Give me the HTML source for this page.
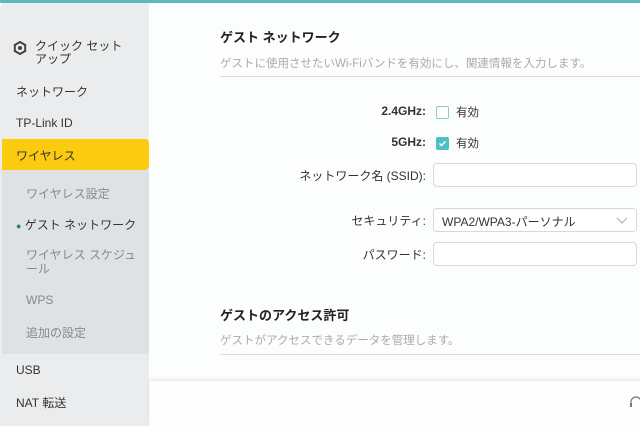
<!DOCTYPE html>
<html><head><meta charset="utf-8"><style>
*{margin:0;padding:0;box-sizing:border-box}
body{width:640px;height:426px;overflow:hidden;background:#fcfdfd;font-family:"Liberation Sans","Noto Sans CJK JP",sans-serif;position:relative}
.top{position:absolute;left:0;top:0;width:640px;height:3px;background:#5fb8c0}
.side{position:absolute;left:0;top:0;width:149px;height:426px;background:#eaecee;border-top-left-radius:10px}
.t{position:absolute;font-size:12px;color:#333;white-space:nowrap}
.sub{position:absolute;left:2px;top:170px;width:147px;height:184px;background:#dfe2e4}
.sel{position:absolute;left:2px;top:139px;width:147px;height:31px;background:#fccb10;border-radius:0 4px 4px 0}
.g{color:#888}
.h{position:absolute;left:220px;font-size:13px;font-weight:bold;color:#222}
.d{position:absolute;left:220px;font-size:11.5px;color:#aaa;white-space:nowrap}
.line{position:absolute;left:220px;width:420px;height:1px;background:#dcdcdc}
.lab{position:absolute;right:214px;font-size:12px;color:#333;text-align:right;white-space:nowrap}
.inp{position:absolute;left:433px;width:204px;height:24px;border:1px solid #d8d8d8;border-radius:4px;background:#fff}
.cb{position:absolute;left:436px;width:13px;height:13px;border:1px solid #8cc;border-radius:2px;background:#fff}
.bot{position:absolute;left:149px;top:381px;width:491px;height:45px;background:#fdfdfd;box-shadow:0 -2px 3px rgba(0,0,0,.08)}
</style></head><body>
<div class="side"></div>
<div class="top"></div>
<div class="sub"></div>
<div class="sel"></div>
<svg style="position:absolute;left:13px;top:41px" width="14" height="14" viewBox="0 0 14 14"><polygon points="7,1 12.2,4 12.2,10 7,13 1.8,10 1.8,4" fill="none" stroke="#444" stroke-width="2"/><circle cx="7" cy="7" r="2" fill="#444"/></svg>
<div class="t" style="left:35px;top:40px;line-height:13px">クイック セット<br>アップ</div>
<div class="t" style="left:16px;top:83px">ネットワーク</div>
<div class="t" style="left:16px;top:116px">TP-Link ID</div>
<div class="t" style="left:16px;top:147px">ワイヤレス</div>
<div class="t g" style="left:26px;top:185px">ワイヤレス設定</div>
<div class="t" style="left:16px;top:216px"><span style="font-size:9px;color:#2a7f80">●</span> ゲスト ネットワーク</div>
<div class="t g" style="left:26px;top:248px;line-height:14px">ワイヤレス スケジュ<br>ール</div>
<div class="t g" style="left:26px;top:293px">WPS</div>
<div class="t g" style="left:26px;top:324px">追加の設定</div>
<div class="t" style="left:16px;top:363px">USB</div>
<div class="t" style="left:16px;top:394px">NAT 転送</div>

<div class="h" style="top:27px">ゲスト ネットワーク</div>
<div class="d" style="top:55px">ゲストに使用させたいWi-Fiバンドを有効にし、関連情報を入力します。</div>
<div class="line" style="top:76px"></div>

<div class="lab" style="top:104px;font-weight:bold">2.4GHz:</div>
<div class="cb" style="top:106px"></div>
<div class="t" style="left:456px;top:104px;font-size:11.5px">有効</div>
<div class="lab" style="top:135px;font-weight:bold">5GHz:</div>
<div class="cb" style="top:137px;background:#4fbfc4;border-color:#4fbfc4"><svg width="11" height="11" viewBox="0 0 11 11" style="position:absolute;left:0;top:0"><path d="M2.5 5.5l2 2 4-4" stroke="#fff" stroke-width="1.5" fill="none"/></svg></div>
<div class="t" style="left:456px;top:135px;font-size:11.5px">有効</div>
<div class="lab" style="top:167px">ネットワーク名 (SSID):</div>
<div class="inp" style="top:163px"></div>
<div class="lab" style="top:212px">セキュリティ:</div>
<div class="inp" style="top:208px"><span style="position:absolute;left:8px;top:4px;font-size:12px;color:#333">WPA2/WPA3-パーソナル</span><svg style="position:absolute;right:8px;top:8px" width="12" height="8" viewBox="0 0 12 8"><path d="M1 1l5 5 5-5" stroke="#bbb" stroke-width="1.3" fill="none"/></svg></div>
<div class="lab" style="top:246px">パスワード:</div>
<div class="inp" style="top:242px"></div>

<div class="h" style="top:305px">ゲストのアクセス許可</div>
<div class="d" style="top:332px">ゲストがアクセスできるデータを管理します。</div>
<div class="line" style="top:354px"></div>
<div class="bot"></div>
<svg style="position:absolute;left:628px;top:394px" width="12" height="16" viewBox="0 0 12 16"><path d="M3 12V8a5 5 0 0 1 10 0" stroke="#777" stroke-width="1.2" fill="none"/><rect x="2" y="9" width="2" height="4" fill="#777"/></svg>
</body></html>
